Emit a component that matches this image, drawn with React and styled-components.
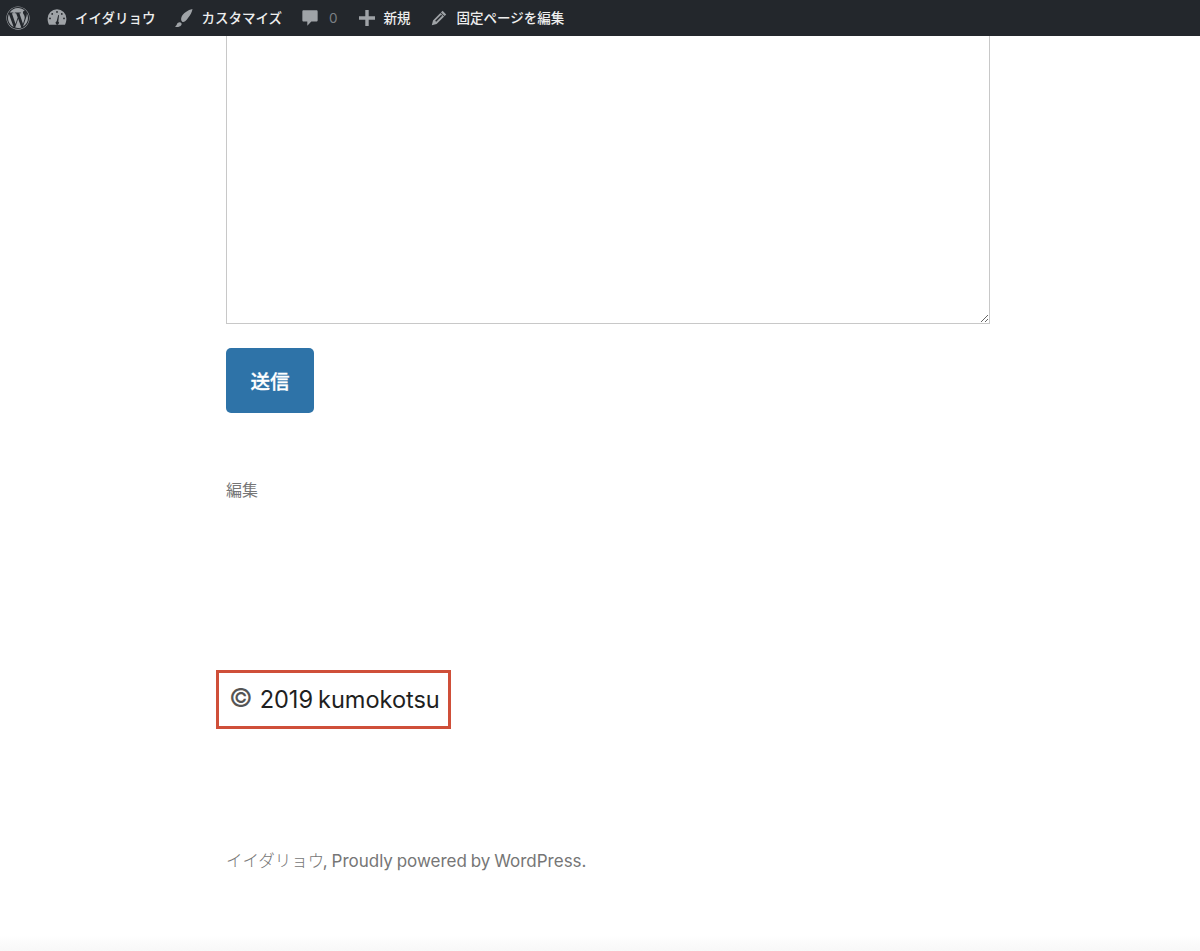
import React from "react";
import styled, { createGlobalStyle } from "styled-components";
import { FaWordpress } from "react-icons/fa";

const Global = createGlobalStyle`
  html, body { margin: 0; padding: 0; background: #fff; }
  body { font-family: Inter, "Noto Sans CJK JP", sans-serif; overflow: hidden; }
`;

const Page = styled.div`
  height: 951px;
  display: flex;
  flex-direction: column;
  overflow: hidden;
  background: linear-gradient(to bottom, #fff 0, #fff 935px, #f8f8f8 951px);
`;

const AdminBar = styled.header`
  height: 36px;
  flex: none;
  background: #23272c;
  display: flex;
  align-items: center;
  padding-left: 6px;
  color: #eee;
  font-size: 13.5px;
  font-weight: 500;
  font-family: "Noto Sans CJK JP", sans-serif;
`;

const BarItem = styled.div`
  display: flex;
  align-items: center;
  margin-left: ${(p) => p.$ml || 0}px;
  gap: ${(p) => p.$gap || 8}px;
  color: #eee;
  white-space: nowrap;
`;

const Label = styled.span`
  position: relative;
  top: -1px;
`;

const Icon = styled.svg`
  display: block;
  width: ${(p) => p.$size || 20}px;
  height: ${(p) => p.$size || 20}px;
  fill: #9fa3a7;
  flex: none;
`;

const WpLogo = styled(FaWordpress)`
  display: block;
  width: 24px;
  height: 24px;
  color: #9fa3a7;
`;

const Count = styled.span`
  font-family: Inter, sans-serif;
  font-weight: 400;
  font-size: 13.5px;
  color: #7b8085;
`;

const Main = styled.main`
  margin-left: 226px;
  width: 764px;
  display: flex;
  flex-direction: column;
  align-items: flex-start;
`;

const Field = styled.textarea`
  display: block;
  box-sizing: border-box;
  width: 764px;
  height: 288px;
  flex: none;
  border: 1px solid #c8c8c8;
  border-top: none;
  background: #fff;
  outline: none;
  resize: both;
  margin: 0;
`;

const Submit = styled.button`
  margin-top: 24px;
  width: 88px;
  height: 65px;
  border: none;
  border-radius: 5px;
  background: #2e73a8;
  color: #fff;
  font-family: "Noto Sans CJK JP", sans-serif;
  font-size: 19.5px;
  font-weight: 500;
  -webkit-text-stroke: 0.3px #fff;
  padding: 0;
`;

const EditLink = styled.div`
  margin-top: 64px;
  font-size: 16px;
  line-height: 24px;
  color: #767676;
  font-family: "Noto Sans CJK JP", sans-serif;
`;

const Callout = styled.div`
  margin-top: 169px;
  margin-left: -10px;
  box-sizing: border-box;
  width: 235px;
  height: 59px;
  border: 3px solid #cf4f39;
  display: flex;
  align-items: center;
  padding-left: 10px;
  gap: 7px;
  color: #1f1f1f;
  font-size: 23.6px;
  letter-spacing: -0.06px;
  word-spacing: -1.5px;
`;

const Copy = styled.span`
  font-size: 26px;
  color: #555;
  position: relative;
  top: -2px;
`;

const Credit = styled.footer`
  margin-top: 119px;
  font-size: 17px;
  line-height: 24px;
  color: #767676;
  word-spacing: -1px;
  white-space: nowrap;
`;

const Kana = styled.span`
  font-family: "Noto Sans CJK JP", sans-serif;
  font-weight: 300;
  font-size: 16.5px;
  margin-right: -1.5px;
`;

export default function App() {
  return (
    <Page>
      <Global />
      <AdminBar>
        <BarItem><WpLogo /></BarItem>
        <BarItem $ml={17}>
          <Icon viewBox="0 0 20 20" $size={20}>
            <path fillRule="evenodd" d="M10 1.200A9.400 9.400 0 0 0 .6 10.600c0 2.400.5 4.200 1.400 6.200h16c.9-2 1.400-3.800 1.400-6.200A9.400 9.400 0 0 0 10 1.200zM10 3a.9.9 0 1 1 0 1.800A.9.9 0 0 1 10 3zM5.200 5a.9.9 0 1 1 0 1.800.9.9 0 0 1 0-1.800zm9.600 0a.9.9 0 1 1 0 1.800.9.9 0 0 1 0-1.800zM3 9.500a.9.9 0 1 1 0 1.800.9.9 0 0 1 0-1.800zm14 0a.9.9 0 1 1 0 1.800.9.9 0 0 1 0-1.800zM11.200 7l.8.2-.7 6.300a1.700 1.700 0 1 1-1.600-.2L11.200 7z" />
          </Icon>
          <Label>イイダリョウ</Label>
        </BarItem>
        <BarItem $ml={18}>
          <Icon viewBox="0 0 20 20" $size={20}>
            <path d="M19.500 1C15 2 10 5 8.500 9 7.800 11 8 13 9.500 14 11 14.500 13 13 15 10c2.500-3 4-6 4.500-9z" />
            <path d="M7.500 14.500C6 14 4.500 15 4 16c-.3 1-1 2-2 2.500 2 1 4.500.5 6-1 1-1 .8-2.500-.5-3z" />
          </Icon>
          <Label>カスタマイズ</Label>
        </BarItem>
        <BarItem $ml={19} $gap={10}>
          <Icon viewBox="0 0 20 20" $size={18}>
            <path d="M3 1.500h14c1 0 1.500.6 1.500 1.500v9.500c0 1-.5 1.500-1.500 1.500h-5.500L7 18.500V14H3c-1 0-1.500-.5-1.500-1.500V3c0-.9.5-1.500 1.500-1.500z" />
          </Icon>
          <Count>0</Count>
        </BarItem>
        <BarItem $ml={21} $gap={9}>
          <Icon viewBox="0 0 16 16" $size={16}>
            <path d="M6.300 0h3.400v6.300H16v3.400H9.700V16H6.300V9.700H0V6.300h6.300z" />
          </Icon>
          <Label>新規</Label>
        </BarItem>
        <BarItem $ml={20} $gap={10}>
          <Icon viewBox="0 0 20 20" $size={16}>
            <path fillRule="evenodd" d="M14.500 1 19 5.500 7 17.500 1 19l1.500-6zM12.700 6 14 7.300 6.500 14.800 5.200 13.500zM11.800 3.700l4.500 4.500.7-.7-4.500-4.500z" />
          </Icon>
          <Label>固定ページを編集</Label>
        </BarItem>
      </AdminBar>
      <Main>
        <Field aria-label="メッセージ" />
        <Submit type="button">送信</Submit>
        <EditLink>編集</EditLink>
        <Callout>
          <Copy>©</Copy>
          <span>2019 kumokotsu</span>
        </Callout>
        <Credit>
          <Kana>イイダリョウ</Kana>, Proudly powered by WordPress.
        </Credit>
      </Main>
    </Page>
  );
}
